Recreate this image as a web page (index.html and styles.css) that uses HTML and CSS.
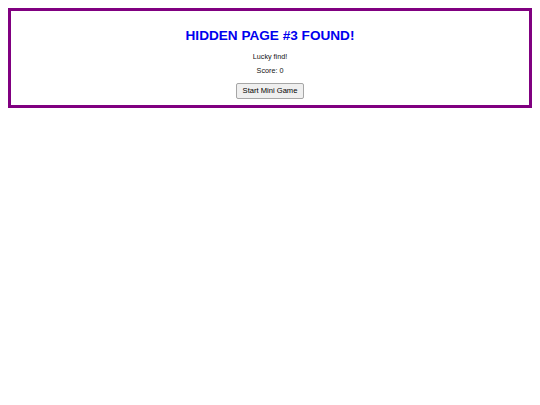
FILE: index.html
```html
<!DOCTYPE html>
<html>
<head>
<meta charset="utf-8">
<link rel="stylesheet" href="styles.css">
</head>
<body>
<div class="box">
  <h2 class="title">HIDDEN PAGE #3 FOUND!</h2>
  <p class="line">Lucky find!</p>
  <p class="line">Score: 0</p>
  <button class="btn">Start Mini Game</button>
</div>
</body>
</html>
```
FILE: styles.css
```css
body {
  margin: 8px;
  font-family: "Liberation Sans", Arial, sans-serif;
  background: #fff;
}
.box {
  border: 3px solid #800080;
  padding: 17px 10px 6px;
  text-align: center;
}
.title {
  color: #0000ee;
  font-size: 13.6px;
  font-weight: bold;
  margin: 0 0 9px;
  line-height: 16px;
}
.line {
  font-size: 7.2px;
  margin: 0 0 6px;
  line-height: 8px;
  color: #111;
}
.btn {
  display: inline-block;
  font-family: "Liberation Sans", Arial, sans-serif;
  font-size: 7.6px;
  line-height: 10px;
  height: 16px;
  padding: 2px 6px;
  background: #efefef;
  border: 1px solid #a6a6a6;
  border-radius: 2px;
  margin: 2px 0 0;
  vertical-align: top;
}
```
